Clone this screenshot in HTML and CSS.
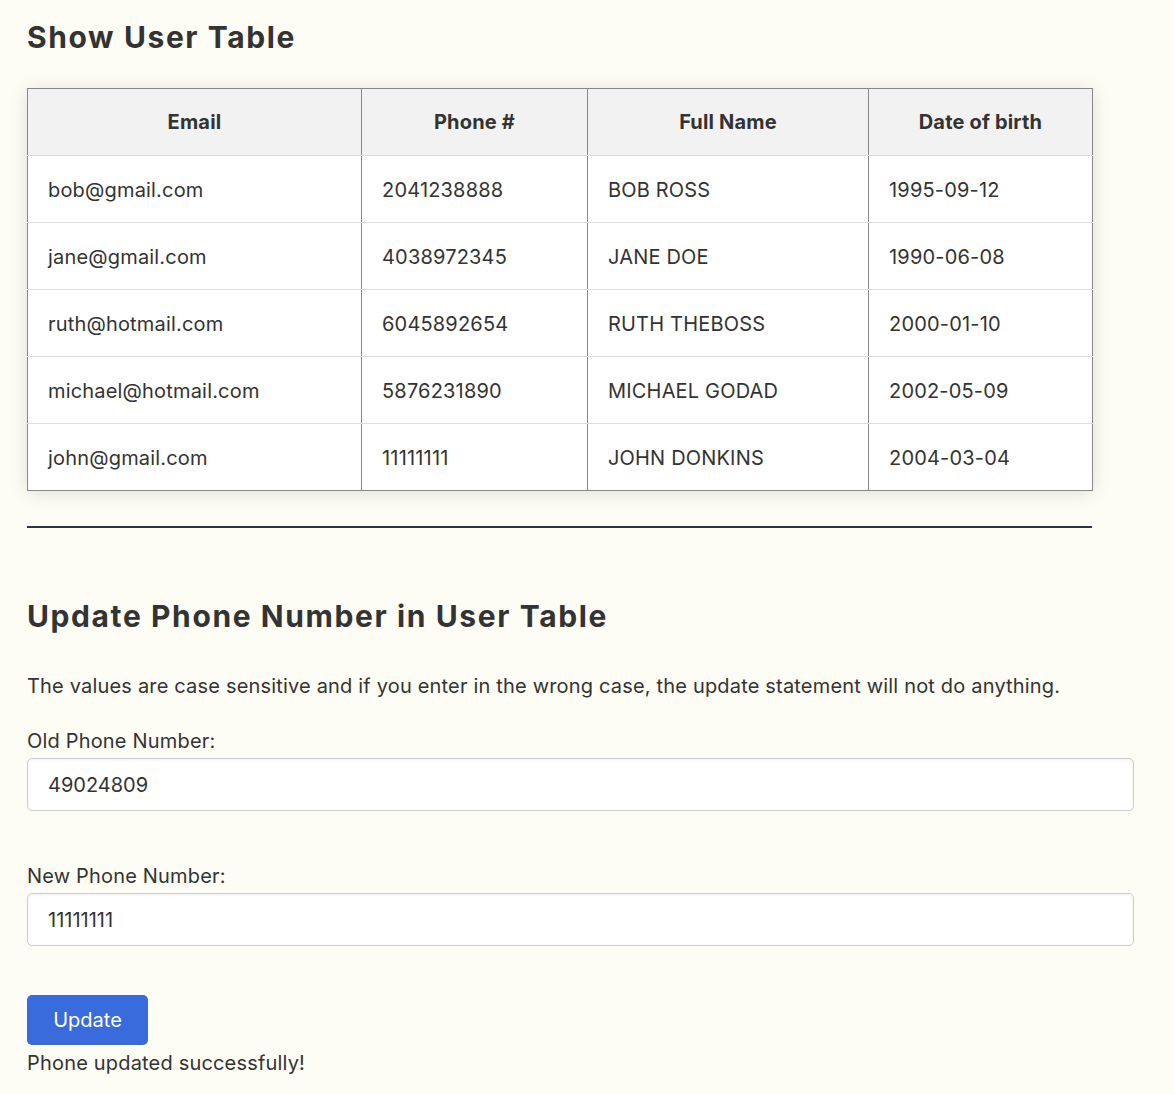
FILE: index.html
```html
<!DOCTYPE html>
<html lang="en">
<head>
<meta charset="utf-8">
<title>User Table</title>
<link rel="stylesheet" href="styles.css">
</head>
<body>
<main class="page">
  <h1 class="title">Show User Table</h1>
  <table class="users">
    <colgroup>
      <col class="c-email"><col class="c-phone"><col class="c-name"><col class="c-dob">
    </colgroup>
    <thead>
      <tr><th>Email</th><th>Phone #</th><th>Full Name</th><th>Date of birth</th></tr>
    </thead>
    <tbody>
      <tr><td>bob@gmail.com</td><td>2041238888</td><td>BOB ROSS</td><td>1995-09-12</td></tr>
      <tr><td>jane@gmail.com</td><td>4038972345</td><td>JANE DOE</td><td>1990-06-08</td></tr>
      <tr><td>ruth@hotmail.com</td><td>6045892654</td><td>RUTH THEBOSS</td><td>2000-01-10</td></tr>
      <tr><td>michael@hotmail.com</td><td>5876231890</td><td>MICHAEL GODAD</td><td>2002-05-09</td></tr>
      <tr><td>john@gmail.com</td><td>11111111</td><td>JOHN DONKINS</td><td>2004-03-04</td></tr>
    </tbody>
  </table>
  <hr class="divider">
  <h2 class="title title-update">Update Phone Number in User Table</h2>
  <p class="note">The values are case sensitive and if you enter in the wrong case, the update statement will not do anything.</p>
  <form class="form">
    <label class="label" for="old">Old Phone Number:</label>
    <input class="field" id="old" type="text" value="49024809">
    <label class="label label-new" for="new">New Phone Number:</label>
    <input class="field" id="new" type="text" value="11111111">
    <button class="btn" type="button">Update</button>
  </form>
  <p class="msg">Phone updated successfully!</p>
</main>
</body>
</html>
```
FILE: styles.css
```css
* { box-sizing: border-box; }
html, body { margin: 0; padding: 0; }
body {
  background: #fdfdf5;
  color: #333333;
  font-family: "Inter", "Liberation Sans", sans-serif;
  font-size: 20px;
  line-height: 24px;
  letter-spacing: 0.18px;
}
.page {
  width: 1065px;
  margin-left: 27px;
  padding-top: 19px;
  padding-bottom: 20px;
}
.title {
  font-size: 30px;
  line-height: 36px;
  font-weight: 700;
  letter-spacing: 1.6px;
  margin: 0 0 33px;
}
.users {
  width: 100%;
  table-layout: fixed;
  border-collapse: collapse;
  background: #ffffff;
  border: 1px solid #888888;
  box-shadow: 0 2px 18px rgba(0, 0, 0, 0.12);
}
.c-email { width: 334px; }
.c-phone { width: 226px; }
.c-name { width: 281px; }
.c-dob { width: 224px; }
.users th, .users td {
  border-left: 1px solid #888888;
  border-right: 1px solid #888888;
  border-bottom: 1px solid #dddddd;
  padding: 22px 20px 20px;
  text-align: left;
  font-weight: 400;
}
.users th {
  background: #f2f2f2;
  text-align: center;
  font-weight: 700;
  padding: 21px 20px;
}
.users tbody tr:last-child td { border-bottom: 1px solid #888888; }
.divider {
  border: 0;
  height: 2px;
  background: #2d3340;
  margin: 35px 0 0;
}
.title-update {
  margin: 70px 0 0;
}
.note {
  margin: 40px 0 0;
}
.form {
  display: flex;
  flex-direction: column;
  align-items: flex-start;
}
.label {
  display: block;
  margin-top: 31px;
}
.label-new { margin-top: 53px; }
.field {
  margin-top: 5px;
  width: 1107px;
  height: 53px;
  padding: 0 20px;
  border: 1px solid #cccccc;
  border-radius: 5px;
  background: #ffffff;
  font-family: inherit;
  font-size: 20px;
  color: #333333;
  box-shadow: inset 0 1px 3px rgba(0, 0, 0, 0.06);
}
.btn {
  margin-top: 49px;
  width: 121px;
  height: 50px;
  border: 0;
  border-radius: 5px;
  background: #3a6bdc;
  color: #ffffff;
  font-family: inherit;
  font-size: 20px;
}
.msg {
  margin: 6px 0 0;
}
```
